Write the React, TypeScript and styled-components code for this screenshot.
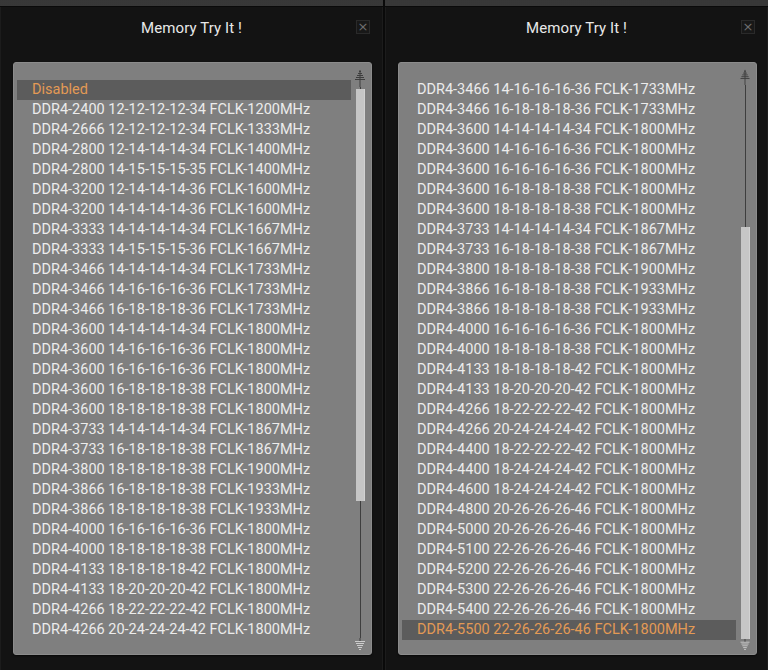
import React from 'react';
import styled, { createGlobalStyle } from 'styled-components';

const GlobalStyle = createGlobalStyle`
  html, body {
    margin: 0;
    padding: 0;
    background: #0c0c0c;
  }
  body {
    font-family: Roboto, "Liberation Sans", sans-serif;
  }
`;

type Item = { label: string; active?: boolean };

const leftItems: Item[] = [
  { label: 'Disabled', active: true },
  { label: 'DDR4-2400 12-12-12-12-34 FCLK-1200MHz' },
  { label: 'DDR4-2666 12-12-12-12-34 FCLK-1333MHz' },
  { label: 'DDR4-2800 12-14-14-14-34 FCLK-1400MHz' },
  { label: 'DDR4-2800 14-15-15-15-35 FCLK-1400MHz' },
  { label: 'DDR4-3200 12-14-14-14-36 FCLK-1600MHz' },
  { label: 'DDR4-3200 14-14-14-14-36 FCLK-1600MHz' },
  { label: 'DDR4-3333 14-14-14-14-34 FCLK-1667MHz' },
  { label: 'DDR4-3333 14-15-15-15-36 FCLK-1667MHz' },
  { label: 'DDR4-3466 14-14-14-14-34 FCLK-1733MHz' },
  { label: 'DDR4-3466 14-16-16-16-36 FCLK-1733MHz' },
  { label: 'DDR4-3466 16-18-18-18-36 FCLK-1733MHz' },
  { label: 'DDR4-3600 14-14-14-14-34 FCLK-1800MHz' },
  { label: 'DDR4-3600 14-16-16-16-36 FCLK-1800MHz' },
  { label: 'DDR4-3600 16-16-16-16-36 FCLK-1800MHz' },
  { label: 'DDR4-3600 16-18-18-18-38 FCLK-1800MHz' },
  { label: 'DDR4-3600 18-18-18-18-38 FCLK-1800MHz' },
  { label: 'DDR4-3733 14-14-14-14-34 FCLK-1867MHz' },
  { label: 'DDR4-3733 16-18-18-18-38 FCLK-1867MHz' },
  { label: 'DDR4-3800 18-18-18-18-38 FCLK-1900MHz' },
  { label: 'DDR4-3866 16-18-18-18-38 FCLK-1933MHz' },
  { label: 'DDR4-3866 18-18-18-18-38 FCLK-1933MHz' },
  { label: 'DDR4-4000 16-16-16-16-36 FCLK-1800MHz' },
  { label: 'DDR4-4000 18-18-18-18-38 FCLK-1800MHz' },
  { label: 'DDR4-4133 18-18-18-18-42 FCLK-1800MHz' },
  { label: 'DDR4-4133 18-20-20-20-42 FCLK-1800MHz' },
  { label: 'DDR4-4266 18-22-22-22-42 FCLK-1800MHz' },
  { label: 'DDR4-4266 20-24-24-24-42 FCLK-1800MHz' },
];

const rightItems: Item[] = [
  { label: 'DDR4-3466 14-16-16-16-36 FCLK-1733MHz' },
  { label: 'DDR4-3466 16-18-18-18-36 FCLK-1733MHz' },
  { label: 'DDR4-3600 14-14-14-14-34 FCLK-1800MHz' },
  { label: 'DDR4-3600 14-16-16-16-36 FCLK-1800MHz' },
  { label: 'DDR4-3600 16-16-16-16-36 FCLK-1800MHz' },
  { label: 'DDR4-3600 16-18-18-18-38 FCLK-1800MHz' },
  { label: 'DDR4-3600 18-18-18-18-38 FCLK-1800MHz' },
  { label: 'DDR4-3733 14-14-14-14-34 FCLK-1867MHz' },
  { label: 'DDR4-3733 16-18-18-18-38 FCLK-1867MHz' },
  { label: 'DDR4-3800 18-18-18-18-38 FCLK-1900MHz' },
  { label: 'DDR4-3866 16-18-18-18-38 FCLK-1933MHz' },
  { label: 'DDR4-3866 18-18-18-18-38 FCLK-1933MHz' },
  { label: 'DDR4-4000 16-16-16-16-36 FCLK-1800MHz' },
  { label: 'DDR4-4000 18-18-18-18-38 FCLK-1800MHz' },
  { label: 'DDR4-4133 18-18-18-18-42 FCLK-1800MHz' },
  { label: 'DDR4-4133 18-20-20-20-42 FCLK-1800MHz' },
  { label: 'DDR4-4266 18-22-22-22-42 FCLK-1800MHz' },
  { label: 'DDR4-4266 20-24-24-24-42 FCLK-1800MHz' },
  { label: 'DDR4-4400 18-22-22-22-42 FCLK-1800MHz' },
  { label: 'DDR4-4400 18-24-24-24-42 FCLK-1800MHz' },
  { label: 'DDR4-4600 18-24-24-24-42 FCLK-1800MHz' },
  { label: 'DDR4-4800 20-26-26-26-46 FCLK-1800MHz' },
  { label: 'DDR4-5000 20-26-26-26-46 FCLK-1800MHz' },
  { label: 'DDR4-5100 22-26-26-26-46 FCLK-1800MHz' },
  { label: 'DDR4-5200 22-26-26-26-46 FCLK-1800MHz' },
  { label: 'DDR4-5300 22-26-26-26-46 FCLK-1800MHz' },
  { label: 'DDR4-5400 22-26-26-26-46 FCLK-1800MHz' },
  { label: 'DDR4-5500 22-26-26-26-46 FCLK-1800MHz', active: true },
];

const UpArrow = () => (
  <svg width="12" height="18" viewBox="0 0 12 18">
    <g stroke="#3e3e3e" strokeWidth="1">
      <line x1="5" y1="2.5" x2="7" y2="2.5" />
      <line x1="4" y1="4.5" x2="8" y2="4.5" />
      <line x1="3" y1="6.5" x2="9" y2="6.5" />
      <line x1="2" y1="8.5" x2="10" y2="8.5" />
      <line x1="1" y1="10.5" x2="11" y2="10.5" />
      <line x1="6" y1="1" x2="6" y2="18" />
    </g>
  </svg>
);

const DownArrow = () => (
  <svg width="12" height="14" viewBox="0 0 12 14">
    <g stroke="#e0e0e0" strokeWidth="1" opacity="0.8">
      <line x1="1" y1="3.5" x2="11" y2="3.5" />
      <line x1="2" y1="5.5" x2="10" y2="5.5" />
      <line x1="3" y1="7.5" x2="9" y2="7.5" />
      <line x1="4" y1="9.5" x2="8" y2="9.5" />
      <line x1="5" y1="11.5" x2="7" y2="11.5" />
    </g>
    <line x1="6" y1="0" x2="6" y2="3" stroke="#3e3e3e" strokeWidth="1" />
  </svg>
);

const Dialog = ({
  items,
  thumbTop,
  thumbHeight,
}: {
  items: Item[];
  thumbTop: number;
  thumbHeight: number;
}) => (
  <Window>
    <TopBand />
    <TitleBar>
      <Title>Memory Try It !</Title>
      <CloseButton>×</CloseButton>
    </TitleBar>
    <ListBox>
      <Rows>
        {items.map((it) => (
          <Row key={it.label} $active={it.active}>
            {it.label}
          </Row>
        ))}
      </Rows>
      <ScrollBar>
        <UpArrow />
        <Track>
          <Thumb $top={thumbTop} $height={thumbHeight} />
        </Track>
        <DownArrow />
      </ScrollBar>
    </ListBox>
  </Window>
);

const App = () => (
  <>
    <GlobalStyle />
    <Page>
      <Dialog items={leftItems} thumbTop={2} thumbHeight={412} />
      <Dialog items={rightItems} thumbTop={142} thumbHeight={412} />
    </Page>
  </>
);

export default App;

const Page = styled.div`
  display: flex;
  gap: 2px;
  width: 768px;
  height: 670px;
  overflow: hidden;
  background: #0a0a0a;
`;

const Window = styled.section`
  flex: none;
  width: 383px;
  display: flex;
  flex-direction: column;
  background: #131313;
  box-shadow: inset 1px 0 0 #1c1c1c, inset -1px 0 0 #1c1c1c;
`;

const TopBand = styled.div`
  height: 6px;
  background-color: #161616;
  background-image: radial-gradient(circle, #3a3a3a 0.7px, transparent 0.8px);
  background-size: 2px 2px;
  border-bottom: 1px solid #0a0a0a;
`;

const TitleBar = styled.div`
  height: 55px;
  display: flex;
  align-items: center;
  justify-content: center;
  position: relative;
  padding-bottom: 14px;
  box-sizing: border-box;
`;

const Title = styled.div`
  font-family: Roboto, "Liberation Sans", sans-serif;
  font-size: 15px;
  color: #e8e8e8;
  letter-spacing: 0.1px;
`;

const CloseButton = styled.div`
  position: absolute;
  right: 13px;
  top: 13px;
  width: 14px;
  height: 14px;
  box-sizing: border-box;
  border: 1px solid #2a2a2a;
  background: #181818;
  color: #6e6e6e;
  font-family: "DejaVu Sans", sans-serif;
  font-size: 13px;
  line-height: 11px;
  text-align: center;
`;

const ListBox = styled.div`
  display: flex;
  width: 359px;
  margin: 0 0 14px 13px;
  height: 593px;
  background: #7f7f7f;
  border: 1px solid #8c8c8c;
  border-radius: 3px;
  box-shadow: 0 1px 2px rgba(0, 0, 0, 0.6);
  box-sizing: border-box;
`;

const Rows = styled.div`
  width: 334px;
  padding: 17px 0 0 3px;
  display: flex;
  flex-direction: column;
`;

const Row = styled.div<{ $active?: boolean }>`
  height: 20px;
  line-height: 19px;
  padding-left: 15px;
  font-family: Roboto, "Liberation Sans", sans-serif;
  font-size: 14.5px;
  white-space: nowrap;
  color: ${(p) => (p.$active ? '#e39a55' : '#ececec')};
  background: ${(p) => (p.$active ? '#5c5c5c' : 'transparent')};
`;

const ScrollBar = styled.div`
  width: 18px;
  display: flex;
  flex-direction: column;
  align-items: center;
  padding: 6px 0 2px;
  box-sizing: border-box;
`;

const Track = styled.div`
  flex: 1;
  width: 9px;
  display: flex;
  flex-direction: column;
  background: linear-gradient(#3e3e3e, #3e3e3e) center / 1px 100% no-repeat;
`;

const Thumb = styled.div<{ $top: number; $height: number }>`
  margin-top: ${(p) => p.$top}px;
  height: ${(p) => p.$height}px;
  background: #c6c6c6;
  border-right: 1px solid #d2d2d2;
  box-sizing: border-box;
`;
